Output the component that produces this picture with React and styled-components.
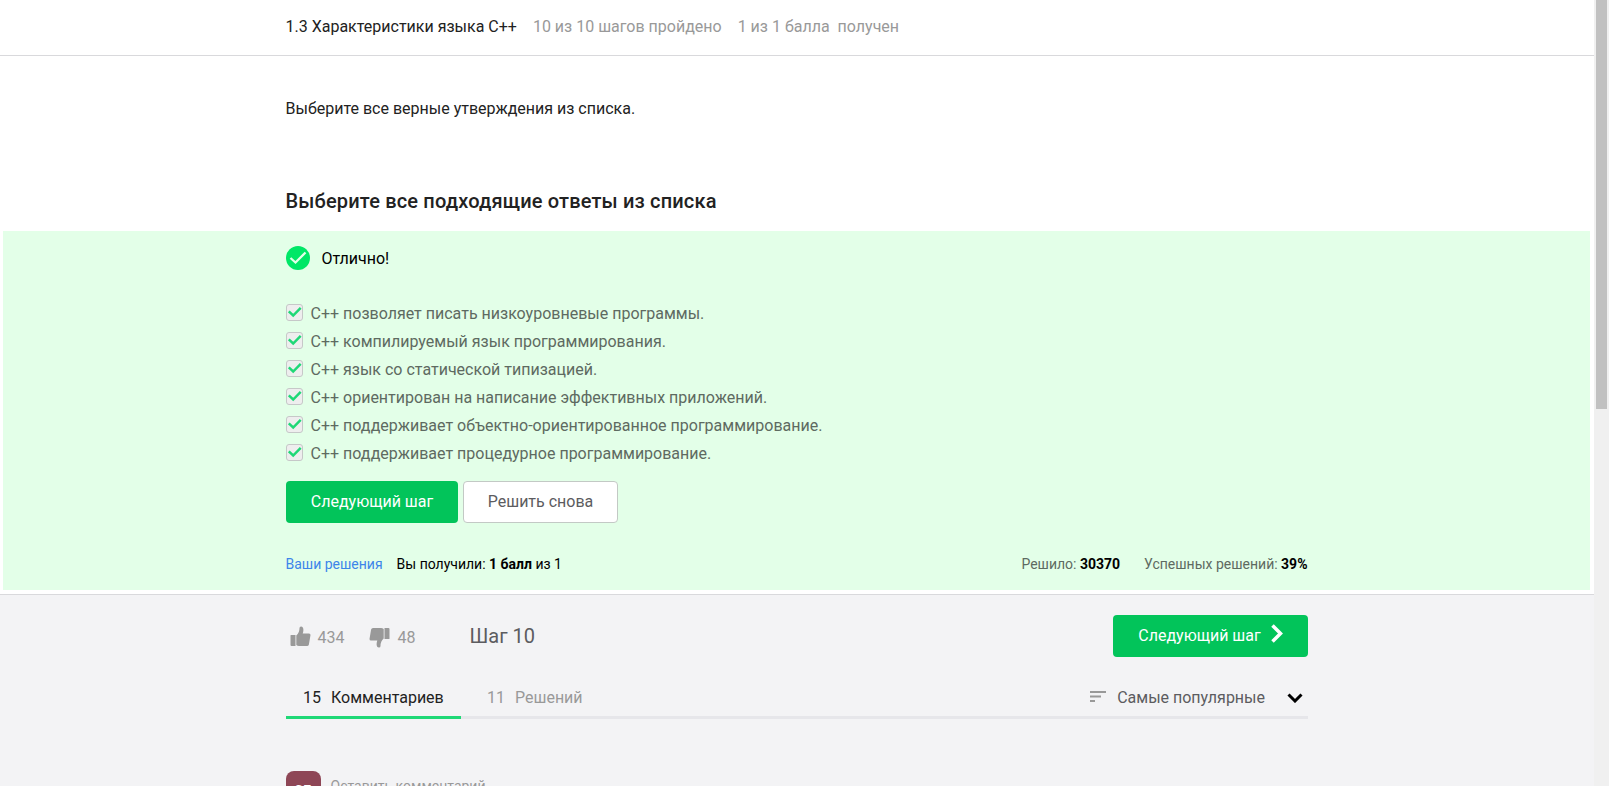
import React from "react";
import styled, { createGlobalStyle } from "styled-components";

const Global = createGlobalStyle`
  * { box-sizing: border-box; }
  html, body { margin: 0; height: 100%; overflow: hidden; }
  body { font-family: Roboto, "Noto Sans", sans-serif; font-size: 16px; line-height: 24px; color: #222; background: #fff; }
  button { font: inherit; cursor: pointer; }
`;

const Window = styled.div`
  display: flex;
  height: 786px;
  overflow: hidden;
`;
const Page = styled.main`
  flex: 1;
  min-width: 0;
`;
const ScrollTrack = styled.div`
  width: 15px;
  padding: 0 2px;
  background: #f0f0f0;
`;
const ScrollThumb = styled.div`
  height: 409px;
  background: #c1c1c1;
`;
const Column = styled.div`
  width: 1022.5px;
  margin-left: ${(p) => p.$left ?? 285.5}px;
`;
const TopBar = styled.header`
  height: 56px;
  padding-top: 15px;
  border-bottom: 1px solid #d9d9dc;
`;
const TopLine = styled(Column)`
  display: flex;
  gap: 16px;
  white-space: pre;
`;
const Muted = styled.span`
  color: #999;
`;
const Prompt = styled.p`
  margin: 0;
  padding-top: 41px;
  height: 129px;
`;
const Title = styled.h2`
  margin: 0;
  height: 46px;
  font-size: 20px;
  line-height: 32px;
  font-weight: 500;
  letter-spacing: 0.16px;
`;
const Result = styled.section`
  height: 359px;
  margin: 0 4px 4px 3px;
  padding-top: 15px;
  background: #e3ffe8;
`;
const Verdict = styled.div`
  display: flex;
  gap: 12px;
  height: 24px;
  margin-bottom: 31px;
  line-height: 26px;
  color: #000;
`;
const Options = styled.ul`
  list-style: none;
  margin: 0;
  padding: 0;
`;
const Option = styled.li`
  display: flex;
  height: 28px;
  gap: 8px;
  line-height: 26px;
  color: #5e6a61;
`;
const Box = styled.span`
  display: flex;
  width: 17px;
  height: 17px;
  margin-top: 3px;
  border: 1px solid #c6c8c8;
  border-radius: 3px;
  background: #eee;
`;
const Actions = styled.div`
  display: flex;
  gap: 5px;
  margin-top: 12px;
`;
const Button = styled.button`
  display: flex;
  align-items: center;
  justify-content: center;
  width: ${(p) => p.$width}px;
  height: 42px;
  padding: 0 0 1px 1px;
  border-radius: 4px;
  border: ${(p) => (p.$plain ? "1px solid #c3c9c5" : "0")};
  background: ${(p) => (p.$plain ? "#fff" : "#02c45a")};
  color: ${(p) => (p.$plain ? "#5c5c60" : "#fff")};
`;
const Stats = styled.div`
  display: flex;
  margin-top: 29px;
  padding-right: 0.5px;
  font-size: 14px;
  color: #000;
`;
const Link = styled.a`
  margin-right: 14px;
  color: #3d85ea;
`;
const Stat = styled.span`
  margin-left: ${(p) => (p.$push ? "auto" : "24px")};
  color: #5e6a61;
  b { color: #000; }
`;
const Footer = styled.section`
  height: 192px;
  border-top: 1px solid #d9d9dc;
  background: #f3f3f5;
`;
const StepRow = styled.div`
  display: flex;
  align-items: center;
  height: 42px;
  margin-top: 20px;
`;
const Vote = styled.span`
  display: flex;
  align-items: center;
  gap: ${(p) => (p.$low ? 8 : 7)}px;
  width: ${(p) => p.$width}px;
  padding-left: 4px;
  line-height: 26px;
  color: #999;
  span { padding-top: 3px; }
  svg { margin-top: ${(p) => (p.$low ? 3 : 1)}px; }
`;
const StepName = styled.span`
  font-size: 20px;
  color: #5c5c60;
`;
const NextSlot = styled.div`
  margin-left: auto;
  button { padding-left: 0; }
  svg { margin: -4px 0 0 10px; }
`;
const Tabs = styled.nav`
  display: flex;
  height: 40px;
  margin-top: 22px;
  box-shadow: inset 0 -3px #e6e6ea;
`;
const Tab = styled.span`
  display: flex;
  gap: 10px;
  width: ${(p) => (p.$active ? 175 : 148)}px;
  padding: 7px 0 0 ${(p) => (p.$active ? 17.5 : 26.5)}px;
  border-bottom: ${(p) => (p.$active ? "3px solid #20d877" : "0")};
  color: ${(p) => (p.$active ? "#222" : "#999")};
`;
const Sort = styled.span`
  display: flex;
  margin-left: auto;
  padding: 7px 5px 0 0;
  color: #5c5c60;
`;
const SortIcon = styled.svg`
  margin: 5px 11.5px 0 0;
`;
const Chevron = styled.svg`
  margin: 7px 0 0 22px;
`;
const CommentRow = styled.div`
  display: flex;
  gap: 10px;
  margin-top: 52px;
`;
const Avatar = styled.div`
  width: 35px;
  height: 35px;
  padding-top: 9px;
  border-radius: 8px;
  background: #8e4656;
  color: #fff;
  font-size: 14px;
  line-height: 22px;
  font-weight: 700;
  text-align: center;
`;
const Placeholder = styled.span`
  padding-top: 3px;
  font-size: 14px;
  color: #999;
`;

const options = [
  "C++ позволяет писать низкоуровневые программы.",
  "C++ компилируемый язык программирования.",
  "C++ язык со статической типизацией.",
  "C++ ориентирован на написание эффективных приложений.",
  "C++ поддерживает объектно-ориентированное программирование.",
  "C++ поддерживает процедурное программирование.",
];

const Thumb = ({ down }) => (
  <svg width="21" height="21" viewBox="0 0 21 21" fill="#999">
    <g transform={down ? "rotate(180 10.5 10.5)" : undefined}>
      <path d="M1 9h4.500v11H1.500Q.5 20 .5 19V9.500Q.5 9 1 9zM6.300 9.500Q9.500 7 9.500 2Q9.500.5 11 .5Q13.400 .5 13.400 4Q13.300 6 12.700 7.500H19Q20.500 7.500 20.500 9L18.900 18.500Q18.500 20 17 20H9Q7.500 20 6.300 19z" />
    </g>
  </svg>
);

export default function App() {
  return (
    <Window>
      <Global />
      <Page>
        <TopBar>
          <TopLine>
            <span>1.3 Характеристики языка C++</span>
            <Muted>10 из 10 шагов пройдено</Muted>
            <Muted>{"1 из 1 балла  получен"}</Muted>
          </TopLine>
        </TopBar>
        <Column>
          <Prompt>Выберите все верные утверждения из списка.</Prompt>
          <Title>Выберите все подходящие ответы из списка</Title>
        </Column>
        <Result>
          <Column $left={282.5}>
            <Verdict>
              <svg width="24" height="24" viewBox="0 0 24 24" fill="none">
                <circle cx="12" cy="12" r="12" fill="#00e766" />
                <path d="M4.500 12l5 4.500L19.500 6.500" stroke="#e3ffe8" strokeWidth="2.300" />
              </svg>
              <span>Отлично!</span>
            </Verdict>
            <Options>
              {options.map((text) => (
                <Option key={text}>
                  <Box>
                    <svg width="15" height="15" viewBox="0 0 15 15" fill="none">
                      <path d="M1.800 6.300l4.400 4.200L13.700 2.800" stroke="#20d877" strokeWidth="2.500" />
                    </svg>
                  </Box>
                  {text}
                </Option>
              ))}
            </Options>
            <Actions>
              <Button $width={172}>Следующий шаг</Button>
              <Button $width={155} $plain>Решить снова</Button>
            </Actions>
            <Stats>
              <Link>Ваши решения</Link>
              <span>Вы получили: <b>1 балл</b> из 1</span>
              <Stat $push>Решило: <b>30370</b></Stat>
              <Stat>Успешных решений: <b>39%</b></Stat>
            </Stats>
          </Column>
        </Result>
        <Footer>
          <Column>
            <StepRow>
              <Vote $width={79}><Thumb /><span>434</span></Vote>
              <Vote $width={105} $low><Thumb down /><span>48</span></Vote>
              <StepName>Шаг 10</StepName>
              <NextSlot>
                <Button $width={195}>
                  Следующий шаг
                  <svg width="12" height="19" viewBox="0 0 12 19" fill="none">
                    <path d="M1.500 1.500L9.500 9.500L1.500 17.500" stroke="#fff" strokeWidth="3.500" />
                  </svg>
                </Button>
              </NextSlot>
            </StepRow>
            <Tabs>
              <Tab $active><span>15</span><span>Комментариев</span></Tab>
              <Tab><span>11</span><span>Решений</span></Tab>
              <Sort>
                <SortIcon width="16" height="11" viewBox="0 0 16 11" fill="#999">
                  <path d="M0 0h16v2H0zM0 4.500h11v2H0zM0 9h5v2H0z" />
                </SortIcon>
                Самые популярные
                <Chevron width="16" height="10" viewBox="0 0 16 10" fill="none">
                  <path d="M1.500 1.500L8 8L14.500 1.500" stroke="#000" strokeWidth="3" />
                </Chevron>
              </Sort>
            </Tabs>
            <CommentRow>
              <Avatar>СБ</Avatar>
              <Placeholder>Оставить комментарий</Placeholder>
            </CommentRow>
          </Column>
        </Footer>
      </Page>
      <ScrollTrack><ScrollThumb /></ScrollTrack>
    </Window>
  );
}
